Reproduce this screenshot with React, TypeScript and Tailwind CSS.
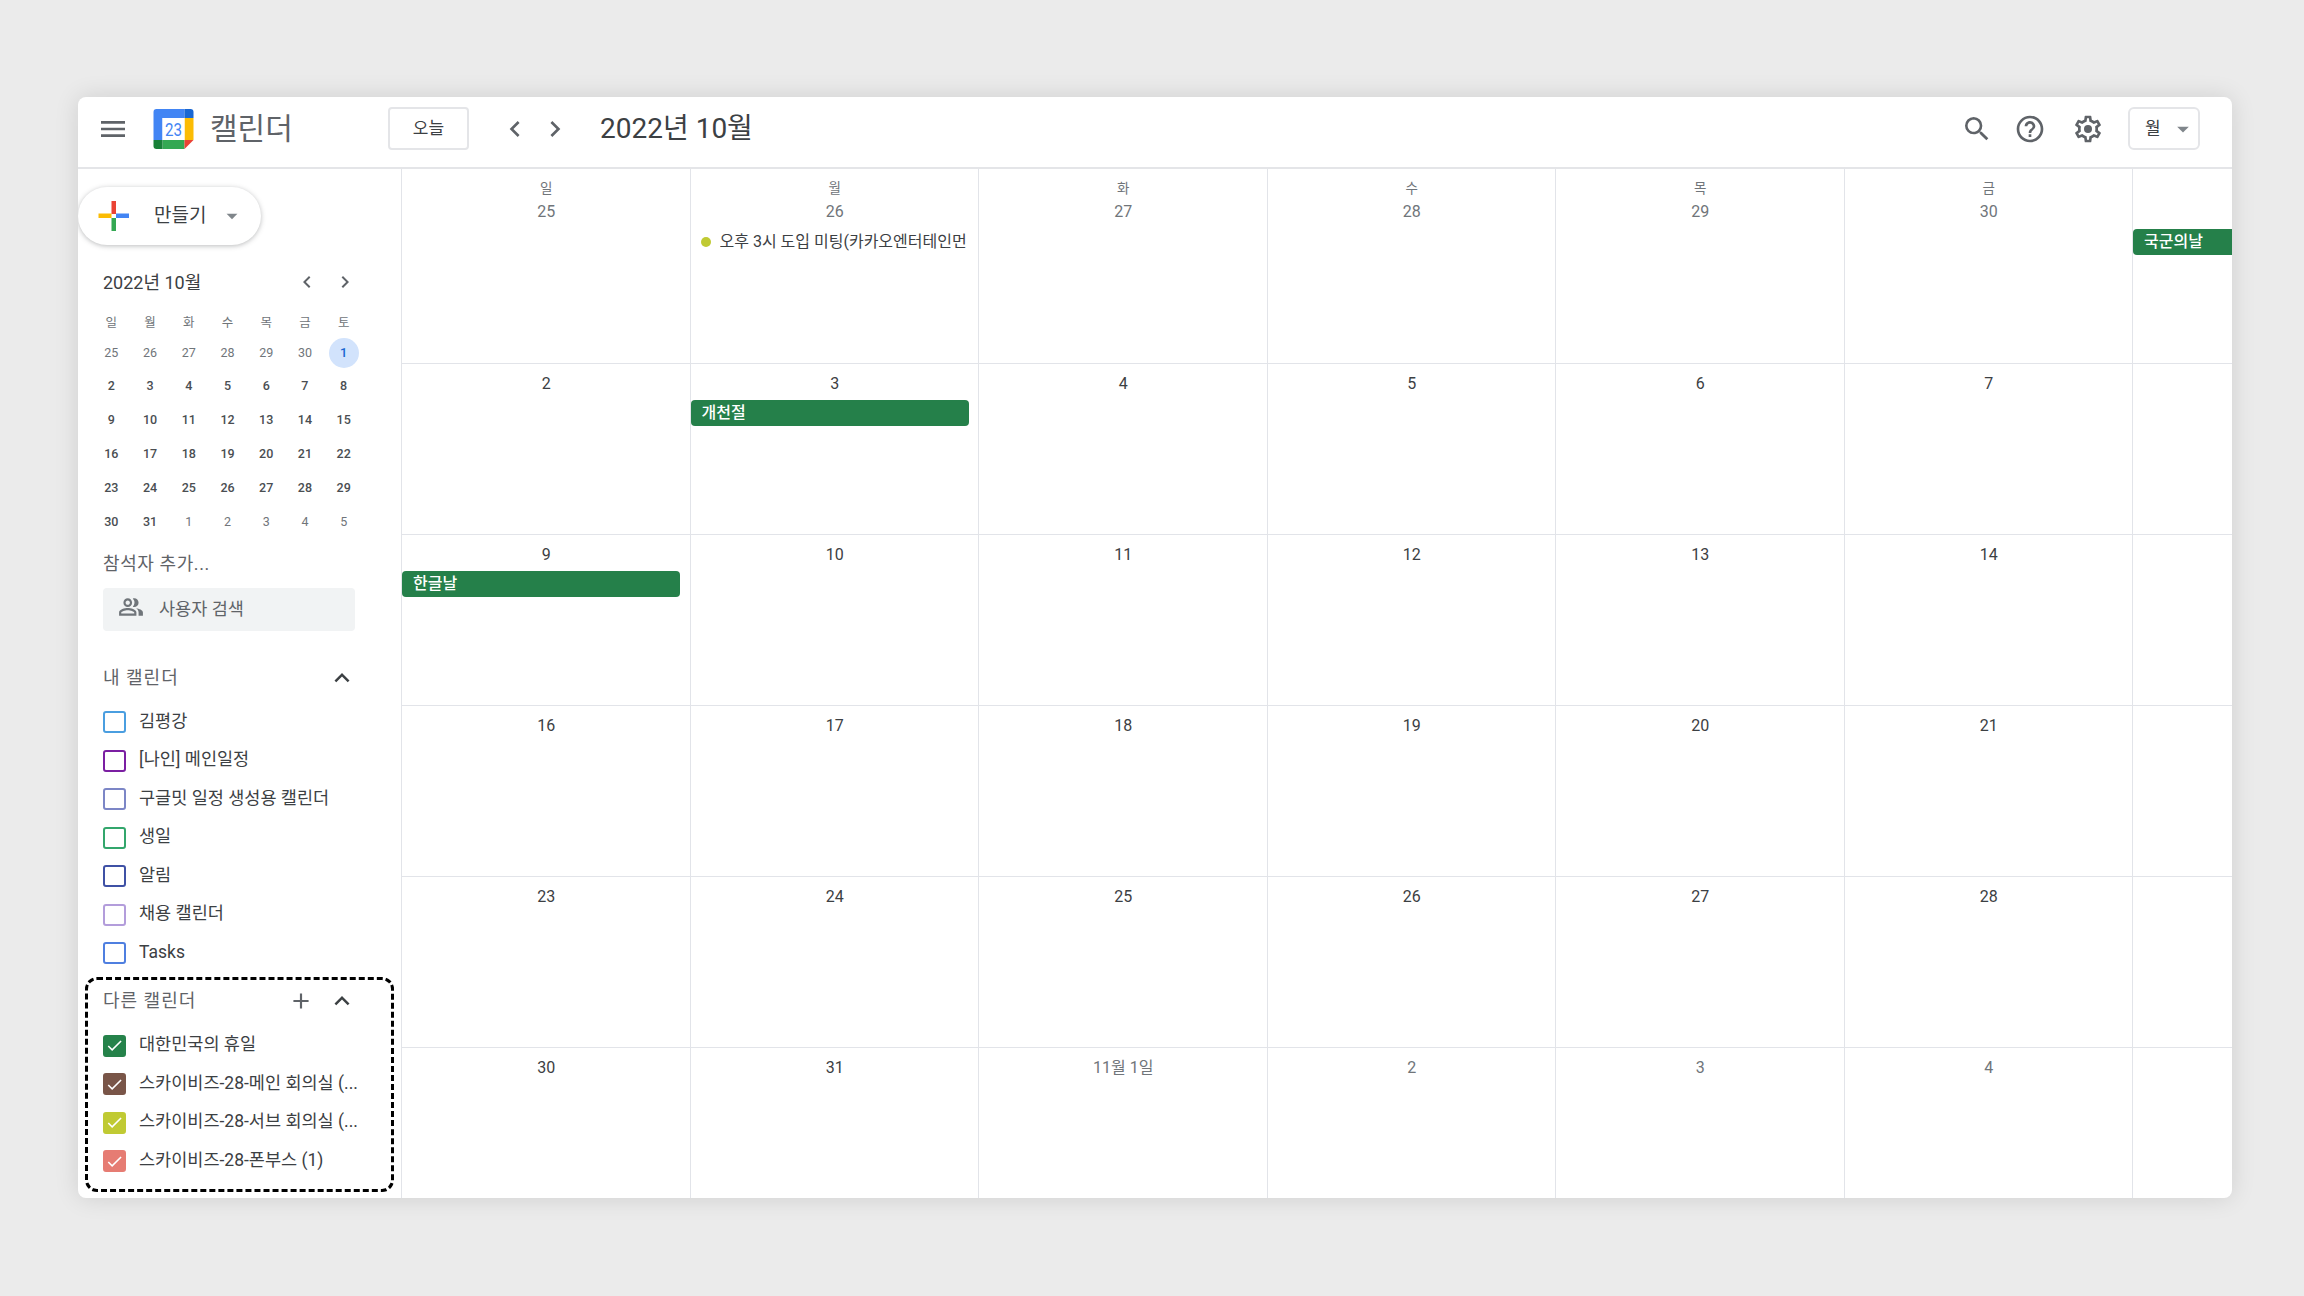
import React from "react";
import {
  MdMenu,
  MdChevronLeft,
  MdChevronRight,
  MdSearch,
  MdHelpOutline,
  MdArrowDropDown,
  MdExpandLess,
  MdAdd,
  MdOutlinePeopleAlt,
  MdCheck,
} from "react-icons/md";

const font = { fontFamily: '"Roboto","Noto Sans CJK KR",sans-serif' };

function Gear({ className }: { className?: string }) {
  return (
    <svg viewBox="0 0 24 24" className={className} fill="currentColor">
      <path d="M19.43 12.98c.04-.32.07-.64.07-.98 0-.34-.03-.66-.07-.98l2.11-1.65c.19-.15.24-.42.12-.64l-2-3.46c-.09-.16-.26-.25-.44-.25-.06 0-.12.01-.17.03l-2.49 1c-.52-.4-1.08-.73-1.69-.98l-.38-2.65C14.46 2.18 14.25 2 14 2h-4c-.25 0-.46.18-.49.42l-.38 2.65c-.61.25-1.17.59-1.69.98l-2.49-1c-.06-.02-.12-.03-.18-.03-.17 0-.34.09-.43.25l-2 3.46c-.13.22-.07.49.12.64l2.11 1.65c-.04.32-.07.65-.07.98 0 .33.03.66.07.98l-2.11 1.65c-.19.15-.24.42-.12.64l2 3.46c.09.16.26.25.44.25.06 0 .12-.01.17-.03l2.49-1c.52.4 1.08.73 1.69.98l.38 2.65c.03.24.24.42.49.42h4c.25 0 .46-.18.49-.42l.38-2.65c.61-.25 1.17-.59 1.69-.98l2.49 1c.06.02.12.03.18.03.17 0 .34-.09.43-.25l2-3.46c.12-.22.07-.49-.12-.64l-2.11-1.65zm-1.98-1.71c.04.31.05.52.05.73 0 .21-.02.43-.05.73l-.14 1.13.89.7 1.08.84-.7 1.21-1.27-.51-1.04-.42-.9.68c-.43.32-.84.56-1.25.73l-1.06.43-.16 1.13-.2 1.35h-1.4l-.19-1.35-.16-1.13-1.06-.43c-.43-.18-.83-.41-1.23-.71l-.91-.7-1.06.43-1.27.51-.7-1.21 1.08-.84.89-.7-.14-1.13c-.03-.31-.05-.54-.05-.74s.02-.43.05-.73l.14-1.13-.89-.7-1.08-.84.7-1.21 1.27.51 1.04.42.9-.68c.43-.32.84-.56 1.25-.73l1.06-.43.16-1.13.2-1.35h1.39l.19 1.35.16 1.13 1.06.43c.43.18.83.41 1.23.71l.91.7 1.06-.43 1.27-.51.7 1.21-1.07.85-.89.7.14 1.13z" />
      <circle cx="12" cy="12" r="3" />
    </svg>
  );
}

function Logo() {
  return (
    <svg viewBox="0 0 40 40" className="w-[41px] h-[40px] shrink-0">
      <path d="M3 0h28v9H9v22H0V3a3 3 0 0 1 3-3z" fill="#4285f4" />
      <path d="M31 0h6a3 3 0 0 1 3 3v6h-9z" fill="#1967d2" />
      <path d="M31 9h9v22h-9z" fill="#fbbc04" />
      <path d="M9 31h22v9H9z" fill="#34a853" />
      <path d="M0 31h9v9H3a3 3 0 0 1-3-3z" fill="#188038" />
      <path d="M31 31h9l-9 9z" fill="#ea4335" />
      <rect x="9" y="9" width="22" height="22" fill="#fff" />
      <text x="20" y="26.5" textAnchor="middle" fontSize="18" fill="#4285f4" fontFamily="Roboto" textLength="17" lengthAdjust="spacingAndGlyphs">23</text>
    </svg>
  );
}

function PlusLogo() {
  return (
    <svg viewBox="0 0 30 30" className="w-[31px] h-[30px] shrink-0">
      <rect x="13" y="0" width="4.5" height="13" fill="#ea4335" />
      <rect x="17.5" y="12.5" width="13" height="4.5" fill="#4285f4" />
      <rect x="13" y="17" width="4.5" height="13" fill="#34a853" />
      <rect x="0" y="12.5" width="13" height="4.5" fill="#fbbc04" />
    </svg>
  );
}

const miniHead = ["일", "월", "화", "수", "목", "금", "토"];
const miniDays: [string, boolean][] = [
  ...["25", "26", "27", "28", "29", "30"].map((d) => [d, true] as [string, boolean]),
  ["1", false],
  ...Array.from({ length: 30 }, (_, i) => [String(i + 2), false] as [string, boolean]),
  ...["1", "2", "3", "4", "5"].map((d) => [d, true] as [string, boolean]),
];

const mine: [string, string][] = [
  ["김평강", "#4a9ee0"],
  ["[나인] 메인일정", "#7b1fa2"],
  ["구글밋 일정 생성용 캘린더", "#7c86c6"],
  ["생일", "#33a66c"],
  ["알림", "#3f51a5"],
  ["채용 캘린더", "#b39ddb"],
  ["Tasks", "#4f7fe0"],
];
const others: [string, string][] = [
  ["대한민국의 휴일", "#25824a"],
  ["스카이비즈-28-메인 회의실 (...", "#795548"],
  ["스카이비즈-28-서브 회의실 (...", "#c0ca33"],
  ["스카이비즈-28-폰부스 (1)", "#e67c73"],
];

function CheckRow({ label, color, checked }: { label: string; color: string; checked?: boolean }) {
  return (
    <div className="h-[38.5px] flex items-center">
      <span
        className="w-[23px] h-[22px] rounded-[3px] border-[2px] flex items-center justify-center shrink-0"
        style={{ borderColor: color, background: checked ? color : "transparent" }}
      >
        {checked && <MdCheck className="w-[21px] h-[21px] text-white" />}
      </span>
      <span className="ml-[13px] text-[17.5px] text-[#3c4043] whitespace-nowrap -mt-[2px]">{label}</span>
    </div>
  );
}

type Ev = { kind: "bar" | "dot"; text: string };
type Cell = { date: string; head?: string; muted?: boolean; ev?: Ev };

const heads = ["일", "월", "화", "수", "목", "금", ""];
const r1: Cell[] = [
  { date: "25", muted: true },
  { date: "26", muted: true, ev: { kind: "dot", text: "오후 3시 도입 미팅(카카오엔터테인먼트)" } },
  { date: "27", muted: true },
  { date: "28", muted: true },
  { date: "29", muted: true },
  { date: "30", muted: true },
  { date: "", ev: { kind: "bar", text: "국군의날" } },
].map((c, i) => ({ ...c, head: heads[i] })) as Cell[];

const rows: Cell[][] = [
  r1,
  [{ date: "2" }, { date: "3", ev: { kind: "bar", text: "개천절" } }, { date: "4" }, { date: "5" }, { date: "6" }, { date: "7" }, { date: "" }],
  [{ date: "9", ev: { kind: "bar", text: "한글날" } }, { date: "10" }, { date: "11" }, { date: "12" }, { date: "13" }, { date: "14" }, { date: "" }],
  [{ date: "16" }, { date: "17" }, { date: "18" }, { date: "19" }, { date: "20" }, { date: "21" }, { date: "" }],
  [{ date: "23" }, { date: "24" }, { date: "25" }, { date: "26" }, { date: "27" }, { date: "28" }, { date: "" }],
  [{ date: "30" }, { date: "31" }, { date: "11월 1일" }, { date: "2", muted: true }, { date: "3", muted: true }, { date: "4", muted: true }, { date: "" }],
];

function CalCell({ c, first }: { c: Cell; first: boolean }) {
  return (
    <div className="relative flex flex-col items-center border-l-[1.5px] border-[#e2e4e9] min-w-0 overflow-hidden">
      {c.head !== undefined && (
        <div className="mt-[10px] pl-[1px] h-[18px] leading-[18px] text-[13.5px] text-[#70757a]">{c.head || "\u00a0"}</div>
      )}
      <div
        className={`${first ? "mt-[5px]" : "mt-[10px]"} pl-[1px] h-[20px] leading-[20px] text-[16px] ${
          c.muted || c.date.includes("월") ? "text-[#70757a]" : "text-[#3c4043]"
        }`}
      >
        {c.date || "\u00a0"}
      </div>
      {c.ev?.kind === "dot" && (
        <div className="mt-[7px] self-stretch flex items-center h-[26px] pl-[10px] pr-[11px]">
          <span className="w-[10px] h-[10px] rounded-full bg-[#c0ca33] shrink-0" />
          <span className="ml-[9px] text-[16px] text-[#3c4043] whitespace-nowrap overflow-hidden">{c.ev.text}</span>
        </div>
      )}
      {c.ev?.kind === "bar" && (
        <div
          className={`${first ? "mt-[7px]" : "mt-[6px]"} self-start w-[278px] h-[26px] rounded-[4px] bg-[#25804a] text-white text-[16px] font-medium leading-[26px] pl-[11px]`}
        >
          {c.ev.text}
        </div>
      )}
    </div>
  );
}

export default function App() {
  return (
    <div className="w-[2304px] h-[1296px] bg-[#ebebeb] pt-[97px] pl-[78px] overflow-hidden" style={font}>
      <div className="w-[2154px] h-[1101px] bg-white rounded-[8px] shadow-[0_0_24px_rgba(0,0,0,0.12)] overflow-hidden flex flex-col">
        {/* Header */}
        <header className="h-[72px] shrink-0 border-b-2 border-[#e4e5e8] flex items-center pb-[7px]">
          <MdMenu className="ml-[19px] w-[32px] h-[32px] text-[#5f6368] shrink-0" />
          <div className="ml-[24px]">
            <Logo />
          </div>
          <span className="ml-[16px] text-[30px] text-[#5f6368] w-[178px]">캘린더</span>
          <button className="w-[81px] h-[43px] rounded-[4px] border-2 border-[#e4e5e8] text-[17px] text-[#3c4043]">오늘</button>
          <MdChevronLeft className="ml-[30px] w-[32px] h-[32px] text-[#5f6368] shrink-0" />
          <MdChevronRight className="ml-[8px] w-[32px] h-[32px] text-[#5f6368] shrink-0" />
          <span className="ml-[29px] text-[28px] text-[#3c4043] whitespace-nowrap">2022년 10월</span>
          <div className="ml-auto flex items-center">
            <MdSearch className="w-[32px] h-[32px] text-[#5f6368]" />
            <MdHelpOutline className="ml-[21px] w-[32px] h-[32px] text-[#5f6368]" />
            <Gear className="ml-[26px] w-[32px] h-[32px] text-[#5f6368]" />
            <button className="ml-[24px] mr-[32px] w-[72px] h-[43px] rounded-[6px] border-2 border-[#e4e5e8] flex items-center pl-[15px]">
              <span className="text-[17px] text-[#3c4043]">월</span>
              <MdArrowDropDown className="ml-[8px] w-[28px] h-[28px] text-[#80868b]" />
            </button>
          </div>
        </header>

        <div className="flex-1 flex min-h-0">
          {/* Sidebar */}
          <aside className="w-[323px] shrink-0 flex flex-col">
            <div className="mt-[18px] w-[183px] h-[58px] rounded-full bg-white shadow-[0_1px_5px_rgba(60,64,67,0.35)] flex items-center pl-[20px] shrink-0">
              <PlusLogo />
              <span className="ml-[25px] text-[19px] text-[#3c4043]">만들기</span>
              <MdArrowDropDown className="ml-[13px] w-[26px] h-[26px] text-[#80868b]" />
            </div>

            <div className="pl-[25px]">
              <div className="mt-[22px] h-[30px] w-[258px] flex items-center">
                <span className="text-[18px] text-[#3c4043] whitespace-nowrap">2022년 10월</span>
                <MdChevronLeft className="ml-auto w-[24px] h-[24px] text-[#5f6368]" />
                <MdChevronRight className="ml-[14px] mr-[4px] w-[24px] h-[24px] text-[#5f6368]" />
              </div>
              <div className="mt-[12px] -ml-[11px] w-[271px] grid grid-cols-7 text-center">
                {miniHead.map((h) => (
                  <div key={h} className="h-[27px] leading-[27px] text-[12.5px] text-[#70757a]">{h}</div>
                ))}
                {miniDays.map(([d, muted], i) => (
                  <div key={i} className="h-[33.8px] flex items-center justify-center">
                    {i === 6 ? (
                      <span className="w-[30px] h-[30px] rounded-full bg-[#d2e3fc] text-[#1967d2] text-[13px] font-medium flex items-center justify-center">{d}</span>
                    ) : (
                      <span className={`text-[12.5px] ${muted ? "text-[#70757a]" : "text-[#4a4e52] font-medium"}`}>{d}</span>
                    )}
                  </div>
                ))}
              </div>
              <div className="mt-[13px] h-[24px] leading-[24px] text-[18px] tracking-[0.6px] text-[#5f6368]">참석자 추가...</div>
              <div className="mt-[12px] w-[252px] h-[43px] rounded-[4px] bg-[#f1f3f4] flex items-center pl-[15px]">
                <MdOutlinePeopleAlt className="w-[26px] h-[26px] text-[#70757a] -mt-[5px]" />
                <span className="ml-[15px] text-[17.5px] text-[#5f6368]">사용자 검색</span>
              </div>

              <div className="mt-[34px] h-[26px] w-[252px] flex items-center justify-between">
                <span className="text-[18px] tracking-[1px] text-[#5f6368]">내 캘린더</span>
                <MdExpandLess className="w-[30px] h-[30px] text-[#3c4043] -mr-[2px]" />
              </div>
              <div className="mt-[12px]">
                {mine.map(([l, c]) => (
                  <CheckRow key={l} label={l} color={c} />
                ))}
              </div>
            </div>

            {/* Dashed group */}
            <div className="ml-[7px] mt-[5px] w-[309px] h-[215px] rounded-[12px] border-[3px] border-dashed border-black pl-[15px] pt-[9px]">
              <div className="h-[26px] w-[252px] flex items-center -mt-[1px]">
                <span className="text-[18px] tracking-[1px] text-[#5f6368] -mt-[2px]">다른 캘린더</span>
                <MdAdd className="ml-auto w-[26px] h-[26px] text-[#5f6368]" />
                <MdExpandLess className="ml-[13px] w-[30px] h-[30px] text-[#3c4043] -mr-[2px]" />
              </div>
              <div className="mt-[12px]">
                {others.map(([l, c]) => (
                  <CheckRow key={l} label={l} color={c} checked />
                ))}
              </div>
            </div>
          </aside>

          {/* Month grid */}
          <main className="flex-1 min-w-0 overflow-hidden">
            <div className="w-[2019.5px] h-full grid grid-cols-7 grid-rows-[194px_171px_171px_171px_171px_151px]">
              {rows.map((row, ri) =>
                row.map((c, ci) => (
                  <div key={`${ri}-${ci}`} className={`grid min-w-0 ${ri > 0 ? "border-t-[1.5px] border-[#e2e4e9]" : ""}`}>
                    <CalCell c={c} first={ri === 0} />
                  </div>
                ))
              )}
            </div>
          </main>
        </div>
      </div>
    </div>
  );
}
